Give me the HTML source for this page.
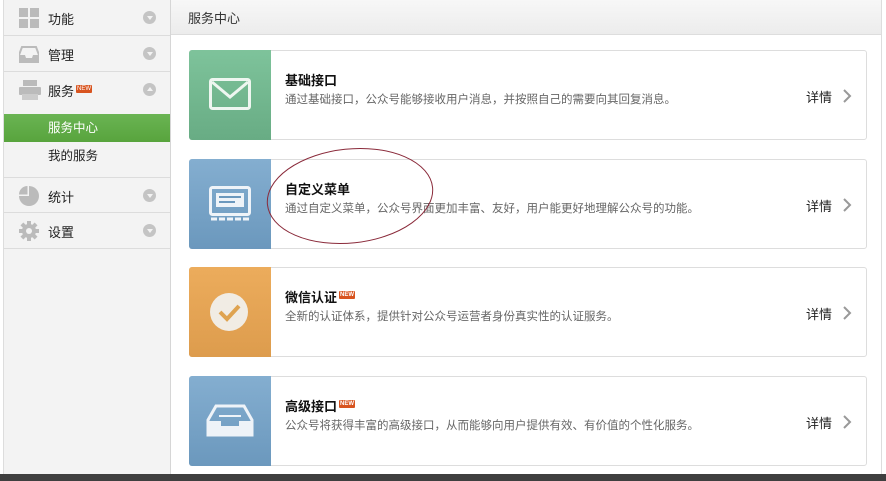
<!DOCTYPE html>
<html><head><meta charset="utf-8"><style>
*{margin:0;padding:0;box-sizing:border-box}
body{width:886px;height:481px;overflow:hidden;background:#fff;font-family:"Liberation Sans","Noto Sans CJK SC",sans-serif;position:relative;font-size:12px;color:#222}
.side{position:absolute;left:3px;top:0;width:168px;height:474px;background:#f3f3f3;border-left:1px solid #ddd;border-right:1px solid #d6d6d6}
.it{position:absolute;left:0;width:166px;height:36px;border-bottom:1px solid #dcdcdc;font-size:13px;color:#222}
.it .t{position:absolute;left:44px;top:9px}
.it .ic{position:absolute;left:15px;top:8px}
.it .ar{position:absolute;left:139px;top:11px;width:13px;height:13px;border-radius:50%;background:#c4c4c4}
.it .ar:after{content:"";position:absolute;left:3.5px;top:4.5px;border-left:3px solid transparent;border-right:3px solid transparent;border-top:4px solid #f3f3f3}
.it .ar.up:after{border-top:0;border-bottom:4px solid #f3f3f3;top:3.5px}
.new{display:inline-block;width:16px;height:8px;background:#d8541f;vertical-align:top;margin-top:4px;margin-left:2px;border-radius:1px;font-size:6px;color:#fff;line-height:8px;text-align:center}
.sub{position:absolute;left:0;width:166px;height:28px;font-size:12.5px;padding-left:44px;line-height:28px}
.head{position:absolute;left:171px;top:0;width:711px;height:35px;background:linear-gradient(#f7f7f7,#ececec);border-bottom:1px solid #ddd;border-right:1px solid #ddd;font-size:13px;color:#333;padding:8px 0 0 17px}
.rb{position:absolute;left:881px;top:35px;width:1px;height:440px;background:#ddd}
.card{position:absolute;left:189px;width:678px;height:90px;border:1px solid #ddd;border-radius:3px;background:#fff}
.card .box{position:absolute;left:-1px;top:-1px;width:82px;height:90px;border-radius:3px 0 0 3px}
.card .ti{position:absolute;left:95px;top:19px;font-size:13px;font-weight:bold;color:#111}
.card .ds{position:absolute;left:95px;top:40px;font-size:11.5px;color:#666}
.card .dt{position:absolute;left:616px;top:36px;font-size:13px;color:#222}
.card .gt{position:absolute;left:652px;top:37px}
.bot{position:absolute;left:0;top:474px;width:886px;height:7px;background:#3f3f3f}
</style></head><body>
<div class="side">
 <div class="it" style="top:0"><svg class="ic" width="20" height="20"><rect x="0" y="0" width="9" height="9" fill="#bbb"/><rect x="11" y="0" width="9" height="9" fill="#bbb"/><rect x="0" y="11" width="9" height="9" fill="#bbb"/><rect x="11" y="11" width="9" height="9" fill="#bbb"/></svg><span class="t">功能</span><span class="ar"></span></div>
 <div class="it" style="top:36px"><svg class="ic" width="20" height="20"><path d="M3 3h14l3 8v7H0v-7z" fill="none" stroke="#bbb" stroke-width="2"/><path d="M1 11h5l1 3h6l1-3h5v7H1z" fill="#bbb"/></svg><span class="t">管理</span><span class="ar"></span></div>
 <div class="it" style="top:72px;height:37px;border-bottom:none"><svg class="ic" width="22" height="20"><rect x="4" y="0" width="14" height="6" fill="#bbb"/><rect x="0" y="7" width="22" height="8" rx="1" fill="#bbb"/><rect x="3" y="14" width="16" height="6" fill="#ccc"/></svg><span class="t">服务<span class="new">NEW</span></span><span class="ar up"></span></div>
 <div class="sub" style="top:114px;background:linear-gradient(#6ab453,#58a43d);color:#fff">服务中心</div>
 <div class="sub" style="top:142px">我的服务</div>
 <div class="it" style="top:177px;border-top:1px solid #dcdcdc"><svg class="ic" width="20" height="20"><path d="M10 0a10 10 0 1 1-10 10h10z" fill="#bbb"/><path d="M8.5 0v8.5H0A8.5 8.5 0 0 1 8.5 0z" fill="#bbb"/></svg><span class="t">统计</span><span class="ar"></span></div>
 <div class="it" style="top:213px"><svg class="ic" width="20" height="20" viewBox="0 0 20 20"><g fill="#bbb"><circle cx="10" cy="10" r="7"/><rect x="8" y="0" width="4" height="20"/><rect x="0" y="8" width="20" height="4"/><rect x="8" y="0" width="4" height="20" transform="rotate(45 10 10)"/><rect x="8" y="0" width="4" height="20" transform="rotate(-45 10 10)"/></g><circle cx="10" cy="10" r="3" fill="#f3f3f3"/></svg><span class="t">设置</span><span class="ar"></span></div>
</div>
<div class="head">服务中心</div>
<div class="rb"></div>

<div class="card" style="top:50px"><div class="box" style="background:linear-gradient(#7ec39b,#68ac84)"><svg style="position:absolute;left:20px;top:28px" width="42" height="32"><rect x="1.5" y="1.5" width="39" height="29" rx="2" fill="none" stroke="#eef6f0" stroke-width="3"/><path d="M3 4l18 15 18-15" fill="none" stroke="#eef6f0" stroke-width="3"/></svg></div><div class="ti">基础接口</div><div class="ds">通过基础接口，公众号能够接收用户消息，并按照自己的需要向其回复消息。</div><div class="dt">详情</div><svg class="gt" width="10" height="16"><path d="M2 2l6 6-6 6" fill="none" stroke="#999" stroke-width="2"/></svg></div>

<div class="card" style="top:159px"><div class="box" style="background:linear-gradient(#84aed0,#6b98bd)"><svg style="position:absolute;left:20px;top:27px" width="42" height="36"><rect x="1.5" y="1.5" width="39" height="27" rx="2" fill="none" stroke="#eef3f8" stroke-width="3"/><rect x="7" y="7" width="28" height="14" fill="#eef3f8"/><path d="M10 11h22M10 16h16" stroke="#6b98bd" stroke-width="2"/><path d="M2 33h38" stroke="#eef3f8" stroke-width="3" stroke-dasharray="6 2"/></svg></div><div class="ti">自定义菜单</div><div class="ds">通过自定义菜单，公众号界面更加丰富、友好，用户能更好地理解公众号的功能。</div><div class="dt">详情</div><svg class="gt" width="10" height="16"><path d="M2 2l6 6-6 6" fill="none" stroke="#999" stroke-width="2"/></svg></div>

<div class="card" style="top:267px"><div class="box" style="background:linear-gradient(#ecac5c,#dd9c4d)"><svg style="position:absolute;left:20px;top:25px" width="40" height="40"><circle cx="20" cy="20" r="19" fill="#f1ece4"/><path d="M11 20l7 7 12-13" fill="none" stroke="#dfa350" stroke-width="4"/></svg></div><div class="ti">微信认证<span class="new">NEW</span></div><div class="ds">全新的认证体系，提供针对公众号运营者身份真实性的认证服务。</div><div class="dt">详情</div><svg class="gt" width="10" height="16"><path d="M2 2l6 6-6 6" fill="none" stroke="#999" stroke-width="2"/></svg></div>

<div class="card" style="top:376px"><div class="box" style="background:linear-gradient(#84aed0,#6b98bd)"><svg style="position:absolute;left:17px;top:28px" width="48" height="34"><path d="M10 2h28l8 14v15H2V16z" fill="none" stroke="#eef3f8" stroke-width="3"/><path d="M3 17h12v5h18v-5h12v13H3z" fill="#eef3f8"/><path d="M13 12h22" stroke="#eef3f8" stroke-width="2"/></svg></div><div class="ti">高级接口<span class="new">NEW</span></div><div class="ds">公众号将获得丰富的高级接口，从而能够向用户提供有效、有价值的个性化服务。</div><div class="dt">详情</div><svg class="gt" width="10" height="16"><path d="M2 2l6 6-6 6" fill="none" stroke="#999" stroke-width="2"/></svg></div>

<svg style="position:absolute;left:0;top:0" width="886" height="481"><ellipse cx="350" cy="196" rx="83" ry="47" transform="rotate(-6 350 196)" fill="none" stroke="#8a2a3a" stroke-width="1"/></svg>
<div class="bot"></div>
</body></html>
